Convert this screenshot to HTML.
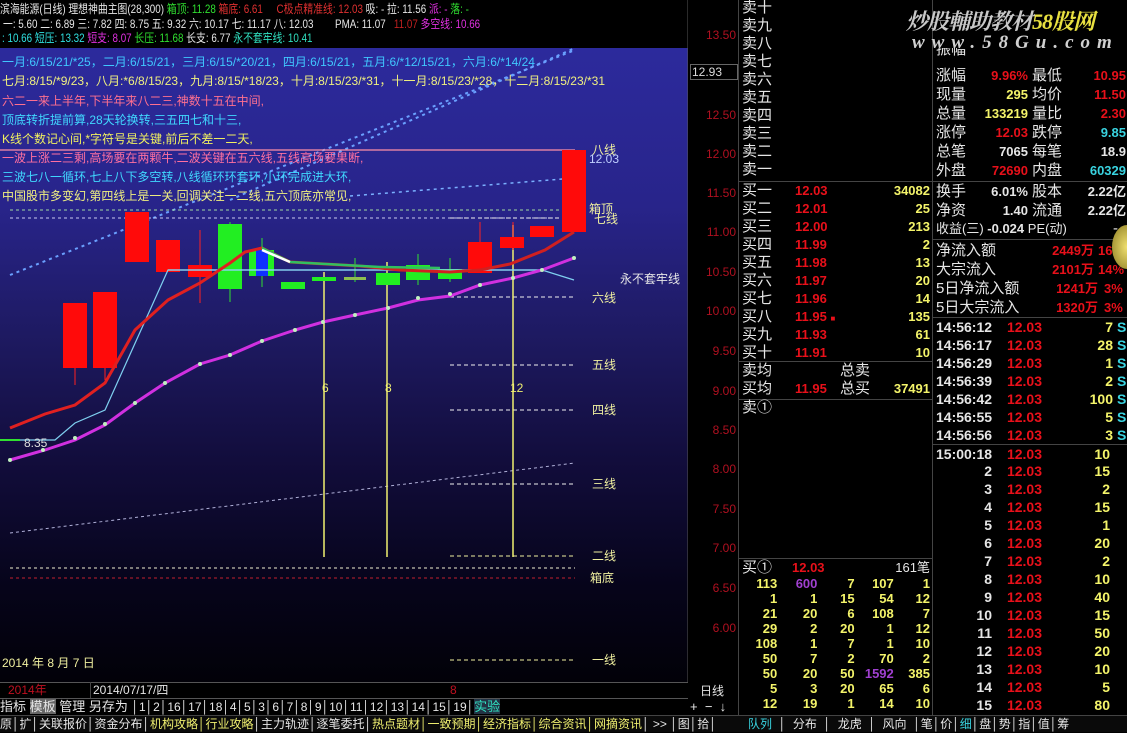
<!DOCTYPE html>
<html><head><meta charset="utf-8">
<style>
*{margin:0;padding:0;box-sizing:border-box}
body{width:1127px;height:732px;background:#000;overflow:hidden;position:relative;font-family:"Liberation Sans","Noto Sans CJK SC",sans-serif;color:#ddd}
.a{position:absolute;white-space:nowrap}
.t{font-size:12px;line-height:14px}
.hd{transform:scaleX(0.82);transform-origin:0 0}
.ob{font-size:15px;line-height:18px;height:18px}
.r{color:#e8101a;font-weight:bold}
.y{color:#f4f46a;font-weight:bold}
.w{color:#e6e6e6}
.c{color:#39d3e0}
.rt{text-align:right}
.bar{font-size:12px;line-height:16px;height:17px}
.p{left:66px;width:40px}
</style></head><body>

<div class="a" style="left:0;top:48px;width:688px;height:634px;background:linear-gradient(#2c2a9c 0%,#28248a 25%,#1e1a62 45%,#120d3c 65%,#06041a 85%,#020108 100%)"></div>

<svg class="a" style="left:0;top:0" width="688" height="682">
 <polyline points="10,275 575,50" stroke="#6aa0ff" stroke-width="2" stroke-dasharray="3,4" fill="none"/>
 <polyline points="230,200 575,48" stroke="#6aa0ff" stroke-width="2" stroke-dasharray="3,4" fill="none"/>
 <polyline points="350,196 575,178" stroke="#7ab0ff" stroke-width="1.5" stroke-dasharray="3,4" fill="none"/>
 <polyline points="10,533 575,463" stroke="#b0b0d8" stroke-width="1" stroke-dasharray="3,3" fill="none"/>
 <line x1="10" y1="210" x2="575" y2="210" stroke="#9fd8a0" stroke-dasharray="3,3"/>
 <line x1="10" y1="218" x2="575" y2="218" stroke="#c8c8f0" stroke-dasharray="3,3"/>
 <line x1="0" y1="150" x2="575" y2="150" stroke="#ff8fa8" stroke-width="1.2"/>
 <line x1="10" y1="568" x2="575" y2="568" stroke="#f0f0d0" stroke-dasharray="3,3"/>
 <line x1="10" y1="578" x2="575" y2="578" stroke="#c02030" stroke-dasharray="3,3"/>
 <g stroke="#f0f0f0" stroke-dasharray="4,3">
  <line x1="450" y1="218" x2="575" y2="218"/>
  <line x1="450" y1="297" x2="575" y2="297"/>
  <line x1="450" y1="365" x2="575" y2="365"/>
  <line x1="450" y1="410" x2="575" y2="410"/>
  <line x1="450" y1="484" x2="575" y2="484"/>
  <line x1="450" y1="556" x2="575" y2="556" stroke="#f0f0a0"/>
  <line x1="450" y1="660" x2="575" y2="660" stroke="#f0f0a0"/>
 </g>
 <g stroke="#f0f070" stroke-width="1.5">
  <line x1="324" y1="272" x2="324" y2="557"/>
  <line x1="387" y1="262" x2="387" y2="557"/>
  <line x1="513" y1="225" x2="513" y2="557"/>
 </g>
 <g fill="#f0f070" font-size="12" font-family="Liberation Sans">
  <text x="322" y="392">6</text><text x="385" y="392">8</text><text x="510" y="392">12</text>
 </g>
 <g stroke="#ff2020" stroke-width="1">
  <line x1="75" y1="368" x2="75" y2="385"/><line x1="105" y1="368" x2="105" y2="380"/>
  <line x1="200" y1="230" x2="200" y2="303"/><line x1="480" y1="222" x2="480" y2="273"/>
  <line x1="513" y1="222" x2="513" y2="250"/>
 </g>
 <g stroke="#30e030"><line x1="230" y1="222" x2="230" y2="302"/><line x1="262" y1="238" x2="262" y2="287"/><line x1="418" y1="254" x2="418" y2="285"/><line x1="450" y1="258" x2="450" y2="282"/><line x1="355" y1="258" x2="355" y2="282"/></g>
 <g fill="#ff0a0a">
  <rect x="63" y="303" width="24" height="65"/>
  <rect x="93" y="292" width="24" height="76"/>
  <rect x="125" y="212" width="24" height="50"/>
  <rect x="156" y="240" width="24" height="32"/>
  <rect x="188" y="265" width="24" height="12"/>
  <rect x="468" y="242" width="24" height="31"/>
  <rect x="500" y="237" width="24" height="11"/>
  <rect x="530" y="226" width="24" height="11"/>
  <rect x="562" y="150" width="24" height="82"/>
 </g>
 <g fill="#22ee22">
  <rect x="218" y="224" width="24" height="65"/>
  <rect x="249" y="250" width="7" height="26"/>
  <rect x="268" y="250" width="6" height="26"/>
  <rect x="281" y="282" width="24" height="7"/>
  <rect x="312" y="277" width="24" height="4"/>
  <rect x="344" y="277" width="22" height="3" fill="#8fbf50"/>
  <rect x="376" y="273" width="24" height="12"/>
  <rect x="406" y="265" width="24" height="15"/>
  <rect x="438" y="269" width="24" height="10"/>
 </g>
 <rect x="256" y="250" width="12" height="26" fill="#1030ff"/>
 <line x1="168" y1="270" x2="542" y2="270" stroke="#c8f0ff" stroke-width="1.2"/>
 <polyline points="5,440 55,440 75,423 105,410 168,270 542,270 574,280" stroke="#7fd0f0" stroke-width="1.2" fill="none"/>
 <polyline points="10,428 45,414 75,405 105,383 135,330 168,300 200,283 230,263 245,252 262,248" stroke="#e02020" stroke-width="3" fill="none"/>
 <polyline points="262,248 290,262 360,266 400,270 450,272 480,270 510,264 545,250 574,232" stroke="#d02020" stroke-width="3" fill="none"/>
 <polyline points="262,248 290,262 380,267 440,268" stroke="#30c060" stroke-width="2.5" fill="none"/>
 <polyline points="262,250 290,262" stroke="#fff" stroke-width="2.5" fill="none"/>
 <line x1="0" y1="440" x2="20" y2="440" stroke="#30e030" stroke-width="2"/>
 <polyline points="10,460 45,450 75,440 105,425 135,403 165,383 200,364 230,355 262,341 295,330 323,322 355,315 388,308 418,300 450,296 480,285 513,278 542,270 574,258" stroke="#d030e0" stroke-width="3" fill="none"/>
 <g fill="#c0f0c0"><circle cx="10" cy="460" r="2"/><circle cx="43" cy="450" r="2"/><circle cx="75" cy="438" r="2"/><circle cx="105" cy="424" r="2"/><circle cx="135" cy="403" r="2"/><circle cx="165" cy="383" r="2"/><circle cx="200" cy="364" r="2"/><circle cx="230" cy="355" r="2"/><circle cx="262" cy="341" r="2"/><circle cx="295" cy="330" r="2"/><circle cx="323" cy="322" r="2"/><circle cx="355" cy="315" r="2"/><circle cx="388" cy="308" r="2"/><circle cx="418" cy="298" r="2"/><circle cx="450" cy="294" r="2"/><circle cx="480" cy="285" r="2"/><circle cx="513" cy="278" r="2"/><circle cx="542" cy="270" r="2"/><circle cx="574" cy="258" r="2"/></g>
 <text x="24" y="447" fill="#ddd" font-size="12" font-family="Liberation Sans">8.35</text>
 <line x1="688" y1="0" x2="688" y2="682" stroke="#555"/>
</svg>

<div class="a t hd" style="left:0;top:2px"><span class="w">滨海能源(日线) 理想神曲主图(28,300)</span> <span style="color:#30e030">箱顶: 11.28</span> <span style="color:#e03030">箱底: 6.61</span> &nbsp;&nbsp;&nbsp;&nbsp;<span style="color:#e03030">C极点精准线: 12.03</span> <span class="w">吸: - 拉: 11.56</span> <span style="color:#e030e0">派: -</span> <span style="color:#30e030">落: -</span></div>
<div class="a t w hd" style="left:3px;top:17px">一: 5.60 二: 6.89 三: 7.82 四: 8.75 五: 9.32 六: 10.17 七: 11.17 八: 12.03</div>
<div class="a t hd" style="left:335px;top:17px"><span class="w">PMA: 11.07</span> &nbsp;&nbsp;<span style="color:#c02020">11.07</span> <span style="color:#e030e0">多空线: 10.66</span></div>
<div class="a t hd" style="left:2px;top:31px"><span style="color:#30e0e0">: 10.66 短压: 13.32</span> <span style="color:#e030e0">短支: 8.07</span> <span style="color:#30e030">长压: 11.68</span> <span class="w">长支: 6.77</span> <span style="color:#30e0c0">永不套牢线: 10.41</span></div>

<div class="a t" style="left:2px;top:55px;color:#40c8ff">一月:6/15/21/*25，二月:6/15/21，三月:6/15/*20/21，四月:6/15/21，五月:6/*12/15/21，六月:6/*14/24</div>
<div class="a t" style="left:2px;top:74px;color:#f0f080">七月:8/15/*9/23，八月:*6/8/15/23，九月:8/15/*18/23，十月:8/15/23/*31，十一月:8/15/23/*28，十二月:8/15/23/*31</div>
<div class="a t" style="left:2px;top:94px;color:#ff7090">六二一来上半年,下半年来八二三,神数十五在中间,</div>
<div class="a t" style="left:2px;top:113px;color:#40d8ff">顶底转折提前算,28天轮换转,三五四七和十三,</div>
<div class="a t" style="left:2px;top:132px;color:#f0f060">K线个数记心间,*字符号是关键,前后不差一二天,</div>
<div class="a t" style="left:2px;top:151px;color:#ff70a0">一波上涨二三剩,高场要在两颗牛,二波关键在五六线,五线高场要果断,</div>
<div class="a t" style="left:2px;top:170px;color:#40d8ff">三波七八一循环,七上八下多空转,八线循环环套环,小环完成进大环,</div>
<div class="a t" style="left:2px;top:189px;color:#f0f080">中国股市多变幻,第四线上是一关,回调关注一二线,五六顶底亦常见,</div>

<div class="a t" style="left:592px;top:143px;color:#f0f0a0">八线</div>
<div class="a t" style="left:589px;top:152px;color:#c0d0ff">12.03</div>
<div class="a t" style="left:589px;top:202px;color:#f0f0a0">箱顶</div>
<div class="a t" style="left:594px;top:212px;color:#f0f0a0">七线</div>
<div class="a t w" style="left:620px;top:272px">永不套牢线</div>
<div class="a t" style="left:592px;top:291px;color:#f0f0a0">六线</div>
<div class="a t" style="left:592px;top:358px;color:#f0f0a0">五线</div>
<div class="a t" style="left:592px;top:403px;color:#f0f0a0">四线</div>
<div class="a t" style="left:592px;top:477px;color:#f0f0a0">三线</div>
<div class="a t" style="left:592px;top:549px;color:#f0f0a0">二线</div>
<div class="a t" style="left:590px;top:571px;color:#f0f0a0">箱底</div>
<div class="a t" style="left:592px;top:653px;color:#f0f0a0">一线</div>
<div class="a t" style="left:2px;top:656px;color:#f0f0a0">2014 年 8 月 7 日</div>

<div class="a t" style="left:690px;top:0;width:48px;height:682px;color:#b01020;text-align:right;font-size:12px">
 <div class="a" style="right:2px;top:28px">13.50</div>
 <div class="a" style="left:0;top:64px;width:48px;border:1px solid #666;background:#000;color:#ddd;text-align:left;padding-left:1px">12.93</div>
 <div class="a" style="right:2px;top:108px">12.50</div>
 <div class="a" style="right:2px;top:147px">12.00</div>
 <div class="a" style="right:2px;top:186px">11.50</div>
 <div class="a" style="right:2px;top:225px">11.00</div>
 <div class="a" style="right:2px;top:265px">10.50</div>
 <div class="a" style="right:2px;top:304px">10.00</div>
 <div class="a" style="right:2px;top:344px">9.50</div>
 <div class="a" style="right:2px;top:384px">9.00</div>
 <div class="a" style="right:2px;top:423px">8.50</div>
 <div class="a" style="right:2px;top:462px">8.00</div>
 <div class="a" style="right:2px;top:502px">7.50</div>
 <div class="a" style="right:2px;top:541px">7.00</div>
 <div class="a" style="right:2px;top:581px">6.50</div>
 <div class="a" style="right:2px;top:621px">6.00</div>
</div>
<div class="a" style="left:738px;top:0;width:1px;height:732px;background:#444"></div>
<div class="a" style="left:932px;top:0;width:1px;height:715px;background:#444"></div>
<div class="a" style="left:738px;top:181px;width:194px;height:1px;background:#444"></div>
<div class="a" style="left:738px;top:361px;width:194px;height:1px;background:#444"></div>
<div class="a" style="left:738px;top:399px;width:194px;height:1px;background:#444"></div>
<div class="a" style="left:738px;top:558px;width:194px;height:1px;background:#444"></div>

<div class="a ob w" style="left:742px;top:-1px">卖十</div>
<div class="a ob w" style="left:742px;top:17px">卖九</div>
<div class="a ob w" style="left:742px;top:35px">卖八</div>
<div class="a ob w" style="left:742px;top:53px">卖七</div>
<div class="a ob w" style="left:742px;top:71px">卖六</div>
<div class="a ob w" style="left:742px;top:89px">卖五</div>
<div class="a ob w" style="left:742px;top:107px">卖四</div>
<div class="a ob w" style="left:742px;top:125px">卖三</div>
<div class="a ob w" style="left:742px;top:143px">卖二</div>
<div class="a ob w" style="left:742px;top:161px">卖一</div>

<div class="a ob w" style="left:742px;top:182px">买一</div><div class="a ob r" style="left:795px;top:182px;font-size:13px">12.03</div><div class="a ob y rt" style="left:860px;top:182px;width:70px;font-size:13px">34082</div>
<div class="a ob w" style="left:742px;top:200px">买二</div><div class="a ob r" style="left:795px;top:200px;font-size:13px">12.01</div><div class="a ob y rt" style="left:860px;top:200px;width:70px;font-size:13px">25</div>
<div class="a ob w" style="left:742px;top:218px">买三</div><div class="a ob r" style="left:795px;top:218px;font-size:13px">12.00</div><div class="a ob y rt" style="left:860px;top:218px;width:70px;font-size:13px">213</div>
<div class="a ob w" style="left:742px;top:236px">买四</div><div class="a ob r" style="left:795px;top:236px;font-size:13px">11.99</div><div class="a ob y rt" style="left:860px;top:236px;width:70px;font-size:13px">2</div>
<div class="a ob w" style="left:742px;top:254px">买五</div><div class="a ob r" style="left:795px;top:254px;font-size:13px">11.98</div><div class="a ob y rt" style="left:860px;top:254px;width:70px;font-size:13px">13</div>
<div class="a ob w" style="left:742px;top:272px">买六</div><div class="a ob r" style="left:795px;top:272px;font-size:13px">11.97</div><div class="a ob y rt" style="left:860px;top:272px;width:70px;font-size:13px">20</div>
<div class="a ob w" style="left:742px;top:290px">买七</div><div class="a ob r" style="left:795px;top:290px;font-size:13px">11.96</div><div class="a ob y rt" style="left:860px;top:290px;width:70px;font-size:13px">14</div>
<div class="a ob w" style="left:742px;top:308px">买八</div><div class="a ob r" style="left:795px;top:308px;font-size:13px">11.95 <span style="font-size:8px">■</span></div><div class="a ob y rt" style="left:860px;top:308px;width:70px;font-size:13px">135</div>
<div class="a ob w" style="left:742px;top:326px">买九</div><div class="a ob r" style="left:795px;top:326px;font-size:13px">11.93</div><div class="a ob y rt" style="left:860px;top:326px;width:70px;font-size:13px">61</div>
<div class="a ob w" style="left:742px;top:344px">买十</div><div class="a ob r" style="left:795px;top:344px;font-size:13px">11.91</div><div class="a ob y rt" style="left:860px;top:344px;width:70px;font-size:13px">10</div>
<div class="a ob w" style="left:742px;top:362px">卖均</div><div class="a ob w" style="left:840px;top:362px">总卖</div>
<div class="a ob w" style="left:742px;top:380px">买均</div><div class="a ob r" style="left:795px;top:380px;font-size:13px">11.95</div><div class="a ob w" style="left:840px;top:380px">总买</div><div class="a ob y rt" style="left:860px;top:380px;width:70px;font-size:13px">37491</div>
<div class="a ob w" style="left:742px;top:399px">卖①</div>
<div class="a ob w" style="left:742px;top:559px">买①</div><div class="a ob r" style="left:792px;top:559px;font-size:13px">12.03</div><div class="a ob w rt" style="left:860px;top:559px;width:70px;font-size:13px">161笔</div>

<div class="a" style="left:738px;top:576px;width:194px;font-size:13px;font-weight:bold;color:#f4f46a;line-height:15px">
<table style="border-collapse:collapse;width:194px;text-align:right;font-size:13px;line-height:15px">
<tr><td style="width:39px">113</td><td style="width:40px;color:#a040d0">600</td><td style="width:37px">7</td><td style="width:39px">107</td><td style="width:38px;padding-right:2px">1</td></tr>
<tr><td>1</td><td>1</td><td>15</td><td>54</td><td style="padding-right:2px">12</td></tr>
<tr><td>21</td><td>20</td><td>6</td><td>108</td><td style="padding-right:2px">7</td></tr>
<tr><td>29</td><td>2</td><td>20</td><td>1</td><td style="padding-right:2px">12</td></tr>
<tr><td>108</td><td>1</td><td>7</td><td>1</td><td style="padding-right:2px">10</td></tr>
<tr><td>50</td><td>7</td><td>2</td><td>70</td><td style="padding-right:2px">2</td></tr>
<tr><td>50</td><td>20</td><td>50</td><td style="color:#a040d0">1592</td><td style="padding-right:2px">385</td></tr>
<tr><td>5</td><td>3</td><td>20</td><td>65</td><td style="padding-right:2px">6</td></tr>
<tr><td>12</td><td>19</td><td>1</td><td>14</td><td style="padding-right:2px">10</td></tr>
</table></div>

<div class="a" style="left:906px;top:5px;font-size:22px;font-style:italic;font-weight:bold;color:#c8c8c8;font-family:'Liberation Serif','Noto Serif CJK SC',serif;letter-spacing:-1px">炒股輔助教材<span style="color:#e8e040">58股网</span></div>
<div class="a" style="left:912px;top:32px;font-size:19px;font-style:italic;font-weight:bold;color:#d0d0d0;letter-spacing:7px;font-family:'Liberation Serif',serif">www.58Gu.com</div>

<div class="a" style="left:936px;top:0;width:191px;font-size:15px;line-height:19px">
 <div class="a w" style="left:0;top:48px;height:9px;overflow:hidden;line-height:4px">振幅</div>
 <div class="a w" style="left:0;top:66px">涨幅</div><div class="a r rt" style="left:30px;top:66px;width:62px;font-size:13px">9.96%</div><div class="a w" style="left:96px;top:66px">最低</div><div class="a r rt" style="left:130px;top:66px;width:60px;font-size:13px">10.95</div>
 <div class="a w" style="left:0;top:85px">现量</div><div class="a y rt" style="left:30px;top:85px;width:62px;font-size:13px">295</div><div class="a w" style="left:96px;top:85px">均价</div><div class="a r rt" style="left:130px;top:85px;width:60px;font-size:13px">11.50</div>
 <div class="a w" style="left:0;top:104px">总量</div><div class="a y rt" style="left:30px;top:104px;width:62px;font-size:13px">133219</div><div class="a w" style="left:96px;top:104px">量比</div><div class="a r rt" style="left:130px;top:104px;width:60px;font-size:13px">2.30</div>
 <div class="a w" style="left:0;top:123px">涨停</div><div class="a r rt" style="left:30px;top:123px;width:62px;font-size:13px">12.03</div><div class="a w" style="left:96px;top:123px">跌停</div><div class="a c rt" style="left:130px;top:123px;width:60px;font-size:13px;font-weight:bold">9.85</div>
 <div class="a w" style="left:0;top:142px">总笔</div><div class="a w rt" style="left:30px;top:142px;width:62px;font-size:13px;font-weight:bold">7065</div><div class="a w" style="left:96px;top:142px">每笔</div><div class="a w rt" style="left:130px;top:142px;width:60px;font-size:13px;font-weight:bold">18.9</div>
 <div class="a w" style="left:0;top:161px">外盘</div><div class="a r rt" style="left:30px;top:161px;width:62px;font-size:13px">72690</div><div class="a w" style="left:96px;top:161px">内盘</div><div class="a c rt" style="left:130px;top:161px;width:60px;font-size:13px;font-weight:bold">60329</div>
 <div class="a" style="left:-4px;top:181px;width:195px;height:1px;background:#444"></div>
 <div class="a w" style="left:0;top:182px">换手</div><div class="a w rt" style="left:30px;top:182px;width:62px;font-size:13px;font-weight:bold">6.01%</div><div class="a w" style="left:96px;top:182px">股本</div><div class="a w rt" style="left:130px;top:182px;width:60px;font-size:13px;font-weight:bold">2.22亿</div>
 <div class="a w" style="left:0;top:201px">净资</div><div class="a w rt" style="left:30px;top:201px;width:62px;font-size:13px;font-weight:bold">1.40</div><div class="a w" style="left:96px;top:201px">流通</div><div class="a w rt" style="left:130px;top:201px;width:60px;font-size:13px;font-weight:bold">2.22亿</div>
 <div class="a w" style="left:0;top:219px;font-size:13px">收益(三) <b>-0.024</b> PE(动)</div><div class="a w rt" style="left:150px;top:219px;width:32px">-</div>
 <div class="a" style="left:-4px;top:239px;width:195px;height:1px;background:#444"></div>
 <div class="a w" style="left:0;top:241px">净流入额</div><div class="a r rt" style="left:90px;top:241px;width:68px;font-size:13px">2449万</div><div class="a r" style="left:162px;top:241px;font-size:13px">16</div>
 <div class="a w" style="left:0;top:260px">大宗流入</div><div class="a r rt" style="left:90px;top:260px;width:68px;font-size:13px">2101万</div><div class="a r" style="left:162px;top:260px;font-size:13px">14%</div>
 <div class="a w" style="left:0;top:279px">5日净流入额</div><div class="a r rt" style="left:90px;top:279px;width:72px;font-size:13px">1241万</div><div class="a r" style="left:168px;top:279px;font-size:13px">3%</div>
 <div class="a w" style="left:0;top:298px">5日大宗流入</div><div class="a r rt" style="left:90px;top:298px;width:72px;font-size:13px">1320万</div><div class="a r" style="left:168px;top:298px;font-size:13px">3%</div>
 <div class="a" style="left:-4px;top:317px;width:195px;height:1px;background:#444"></div>
</div>
<div class="a" style="left:1112px;top:225px;width:30px;height:44px;border-radius:50%;background:radial-gradient(#f0e070,#8a7a20)"></div>

<div class="a" style="left:936px;top:318px;width:191px;font-size:14px;line-height:18px;font-weight:bold">
 <div style="height:18px;position:relative"><span class="w">14:56:12</span><span class="a r rt p">12.03</span><span class="a y rt" style="left:137px;width:40px">7</span><span class="a c" style="left:181px">S</span></div>
 <div style="height:18px;position:relative"><span class="w">14:56:17</span><span class="a r rt p">12.03</span><span class="a y rt" style="left:137px;width:40px">28</span><span class="a c" style="left:181px">S</span></div>
 <div style="height:18px;position:relative"><span class="w">14:56:29</span><span class="a r rt p">12.03</span><span class="a y rt" style="left:137px;width:40px">1</span><span class="a c" style="left:181px">S</span></div>
 <div style="height:18px;position:relative"><span class="w">14:56:39</span><span class="a r rt p">12.03</span><span class="a y rt" style="left:137px;width:40px">2</span><span class="a c" style="left:181px">S</span></div>
 <div style="height:18px;position:relative"><span class="w">14:56:42</span><span class="a r rt p">12.03</span><span class="a y rt" style="left:137px;width:40px">100</span><span class="a c" style="left:181px">S</span></div>
 <div style="height:18px;position:relative"><span class="w">14:56:55</span><span class="a r rt p">12.03</span><span class="a y rt" style="left:137px;width:40px">5</span><span class="a c" style="left:181px">S</span></div>
 <div style="height:18px;position:relative"><span class="w">14:56:56</span><span class="a r rt p">12.03</span><span class="a y rt" style="left:137px;width:40px">3</span><span class="a c" style="left:181px">S</span></div>
 <div style="height:1px;background:#444;margin-left:-4px"></div>
 <div style="height:18px;position:relative"><span class="w">15:00:18</span><span class="a r rt p">12.03</span><span class="a y rt" style="left:134px;width:40px">10</span></div>
</div>
<div class="a" style="left:936px;top:462px;width:191px;font-size:14px;line-height:18px;font-weight:bold">
 <div style="height:18px;position:relative"><span class="a w rt" style="left:0;width:56px">2</span><span class="a r rt p">12.03</span><span class="a y rt" style="left:134px;width:40px">15</span></div>
 <div style="height:18px;position:relative"><span class="a w rt" style="left:0;width:56px">3</span><span class="a r rt p">12.03</span><span class="a y rt" style="left:134px;width:40px">2</span></div>
 <div style="height:18px;position:relative"><span class="a w rt" style="left:0;width:56px">4</span><span class="a r rt p">12.03</span><span class="a y rt" style="left:134px;width:40px">15</span></div>
 <div style="height:18px;position:relative"><span class="a w rt" style="left:0;width:56px">5</span><span class="a r rt p">12.03</span><span class="a y rt" style="left:134px;width:40px">1</span></div>
 <div style="height:18px;position:relative"><span class="a w rt" style="left:0;width:56px">6</span><span class="a r rt p">12.03</span><span class="a y rt" style="left:134px;width:40px">20</span></div>
 <div style="height:18px;position:relative"><span class="a w rt" style="left:0;width:56px">7</span><span class="a r rt p">12.03</span><span class="a y rt" style="left:134px;width:40px">2</span></div>
 <div style="height:18px;position:relative"><span class="a w rt" style="left:0;width:56px">8</span><span class="a r rt p">12.03</span><span class="a y rt" style="left:134px;width:40px">10</span></div>
 <div style="height:18px;position:relative"><span class="a w rt" style="left:0;width:56px">9</span><span class="a r rt p">12.03</span><span class="a y rt" style="left:134px;width:40px">40</span></div>
 <div style="height:18px;position:relative"><span class="a w rt" style="left:0;width:56px">10</span><span class="a r rt p">12.03</span><span class="a y rt" style="left:134px;width:40px">15</span></div>
 <div style="height:18px;position:relative"><span class="a w rt" style="left:0;width:56px">11</span><span class="a r rt p">12.03</span><span class="a y rt" style="left:134px;width:40px">50</span></div>
 <div style="height:18px;position:relative"><span class="a w rt" style="left:0;width:56px">12</span><span class="a r rt p">12.03</span><span class="a y rt" style="left:134px;width:40px">20</span></div>
 <div style="height:18px;position:relative"><span class="a w rt" style="left:0;width:56px">13</span><span class="a r rt p">12.03</span><span class="a y rt" style="left:134px;width:40px">10</span></div>
 <div style="height:18px;position:relative"><span class="a w rt" style="left:0;width:56px">14</span><span class="a r rt p">12.03</span><span class="a y rt" style="left:134px;width:40px">5</span></div>
 <div style="height:18px;position:relative"><span class="a w rt" style="left:0;width:56px">15</span><span class="a r rt p">12.03</span><span class="a y rt" style="left:134px;width:40px">80</span></div>
</div>

<div class="a" style="left:0;top:682px;width:688px;height:1px;background:#555"></div>
<div class="a bar" style="left:8px;top:682px;color:#c01020">2014年</div>
<div class="a bar w" style="left:90px;top:682px;border-left:1px solid #444;padding-left:2px">2014/07/17/四</div>
<div class="a bar" style="left:450px;top:682px;color:#c01020">8</div>
<div class="a bar w" style="left:700px;top:683px">日线</div>
<div class="a bar w" style="left:690px;top:699px;font-size:13px">+ &nbsp;− &nbsp;↓</div>
<div class="a" style="left:0;top:698px;width:688px;height:1px;background:#555"></div>
<div class="a bar w" style="left:0;top:699px;font-size:13px">指标 <span style="background:#666">模板</span> 管理 另存为 <span style="font-size:12px">│1│2│16│17│18│4│5│3│6│7│8│9│10│11│12│13│14│15│19│</span><span style="background:#234;color:#30e0c0">实验</span></div>
<div class="a" style="left:0;top:715px;width:1127px;height:17px;background:#0a0a0a;border-top:1px solid #444"></div>
<div class="a bar" style="left:0;top:716px;font-size:12px"><span class="w">原│扩│关联报价│资金分布│</span><span style="color:#f0f070">机构攻略│行业攻略</span><span class="w">│主力轨迹│逐笔委托│</span><span style="color:#f0f070">热点题材│一致预期│经济指标│综合资讯│网摘资讯</span><span class="w">│ &gt;&gt; │图│拾│</span></div>
<div class="a bar" style="left:748px;top:716px;font-size:12px"><span class="c">队列</span><span class="w"> &nbsp;│ &nbsp;分布 &nbsp;│ &nbsp;龙虎 &nbsp;│ &nbsp;风向 &nbsp;│笔│价│</span><span class="c">细</span><span class="w">│盘│势│指│值│筹</span></div>
</body></html>
